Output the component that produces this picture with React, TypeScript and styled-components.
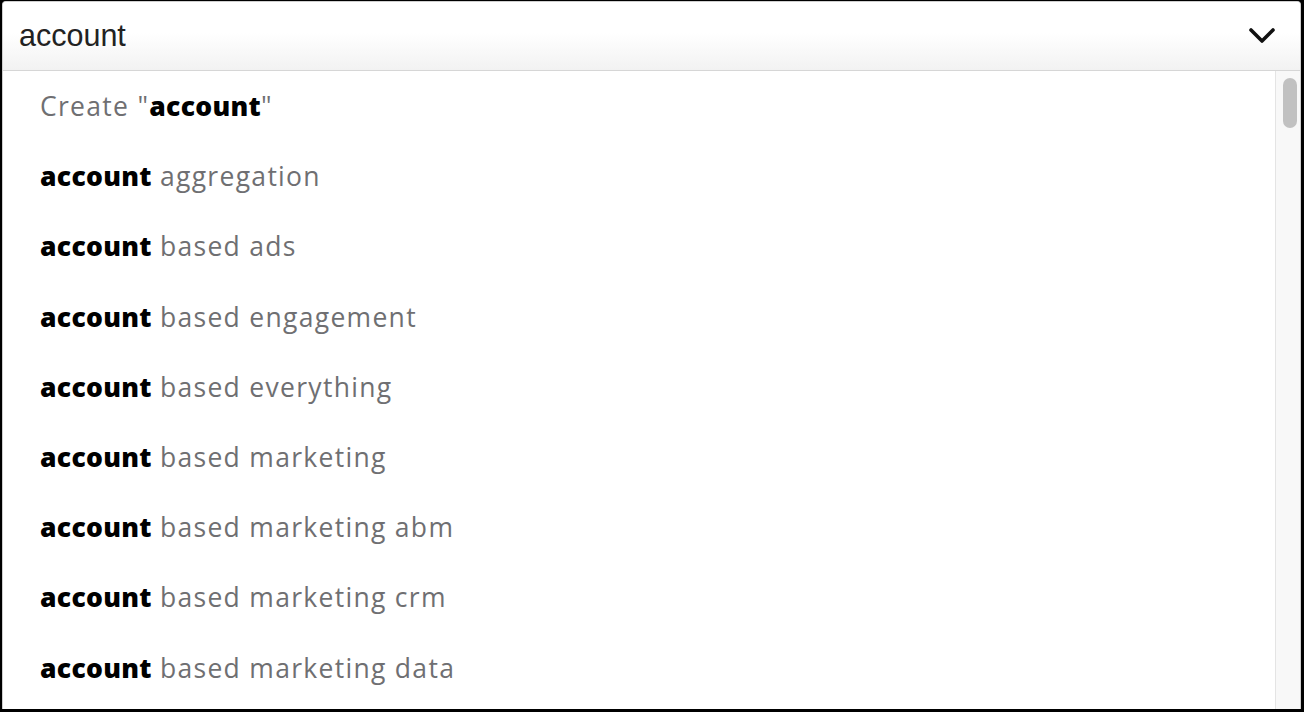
import React from "react";
import styled, { createGlobalStyle } from "styled-components";

const Global = createGlobalStyle`
  html, body { margin: 0; padding: 0; background: #000; }
  #root { width: 1304px; height: 712px; }
`;

const Frame = styled.div`
  box-sizing: border-box;
  width: 1304px;
  height: 712px;
  padding: 1px 3px 3px 2px;
`;

const Panel = styled.div`
  box-sizing: border-box;
  height: 100%;
  display: flex;
  flex-direction: column;
  background: #fff;
  border: 1px solid #cfcfcf;
  border-bottom: none;
  border-radius: 4px 4px 0 0;
  overflow: hidden;
`;

const InputBar = styled.div`
  flex: 0 0 68px;
  display: flex;
  align-items: center;
  justify-content: space-between;
  padding: 0 24px 0 16px;
  background: linear-gradient(#ffffff 0%, #ffffff 45%, #f2f2f2 100%);
  border-bottom: 1px solid #d6d6d6;
`;

const InputText = styled.span`
  font-family: "Liberation Sans", Arial, sans-serif;
  font-size: 30.5px;
  color: #222;
  line-height: 1;
  margin-top: -2px;
`;

const Body = styled.div`
  flex: 1;
  display: flex;
  min-height: 0;
`;

const List = styled.ul`
  flex: 1;
  margin: 0;
  padding: 0;
  list-style: none;
  overflow: hidden;
`;

const Row = styled.li`
  height: 70.2px;
  line-height: 70.2px;
  padding-left: 37px;
  font-family: "Open Sans", "Noto Sans", sans-serif;
  font-size: 26.5px;
  letter-spacing: 1.3px;
  color: #6f6f72;
  white-space: pre;
`;

const Match = styled.b`
  font-weight: 800;
  letter-spacing: 0.3px;
  color: #000;
`;

const Track = styled.div`
  box-sizing: border-box;
  flex: 0 0 25px;
  background: #f8f8f8;
  border-left: 1px solid #e4e4e4;
  padding: 7px 3px 0 7px;
`;

const Thumb = styled.div`
  width: 14px;
  height: 50px;
  border-radius: 7px;
  background: #c1c1c1;
`;

const Chevron = () => (
  <svg width="28" height="18" viewBox="0 0 28 18" fill="none">
    <path d="M3 3 L14 14 L25 3" stroke="#111" strokeWidth="3.6" strokeLinecap="round" strokeLinejoin="round" />
  </svg>
);

const suggestions = [
  "aggregation",
  "based ads",
  "based engagement",
  "based everything",
  "based marketing",
  "based marketing abm",
  "based marketing crm",
  "based marketing data",
];

export default function App() {
  return (
    <>
      <Global />
      <Frame>
        <Panel>
          <InputBar>
            <InputText>account</InputText>
            <Chevron />
          </InputBar>
          <Body>
            <List>
              <Row>
                Create "<Match>account</Match>"
              </Row>
              {suggestions.map((s) => (
                <Row key={s}>
                  <Match>account</Match>
                  {" " + s}
                </Row>
              ))}
            </List>
            <Track>
              <Thumb />
            </Track>
          </Body>
        </Panel>
      </Frame>
    </>
  );
}
